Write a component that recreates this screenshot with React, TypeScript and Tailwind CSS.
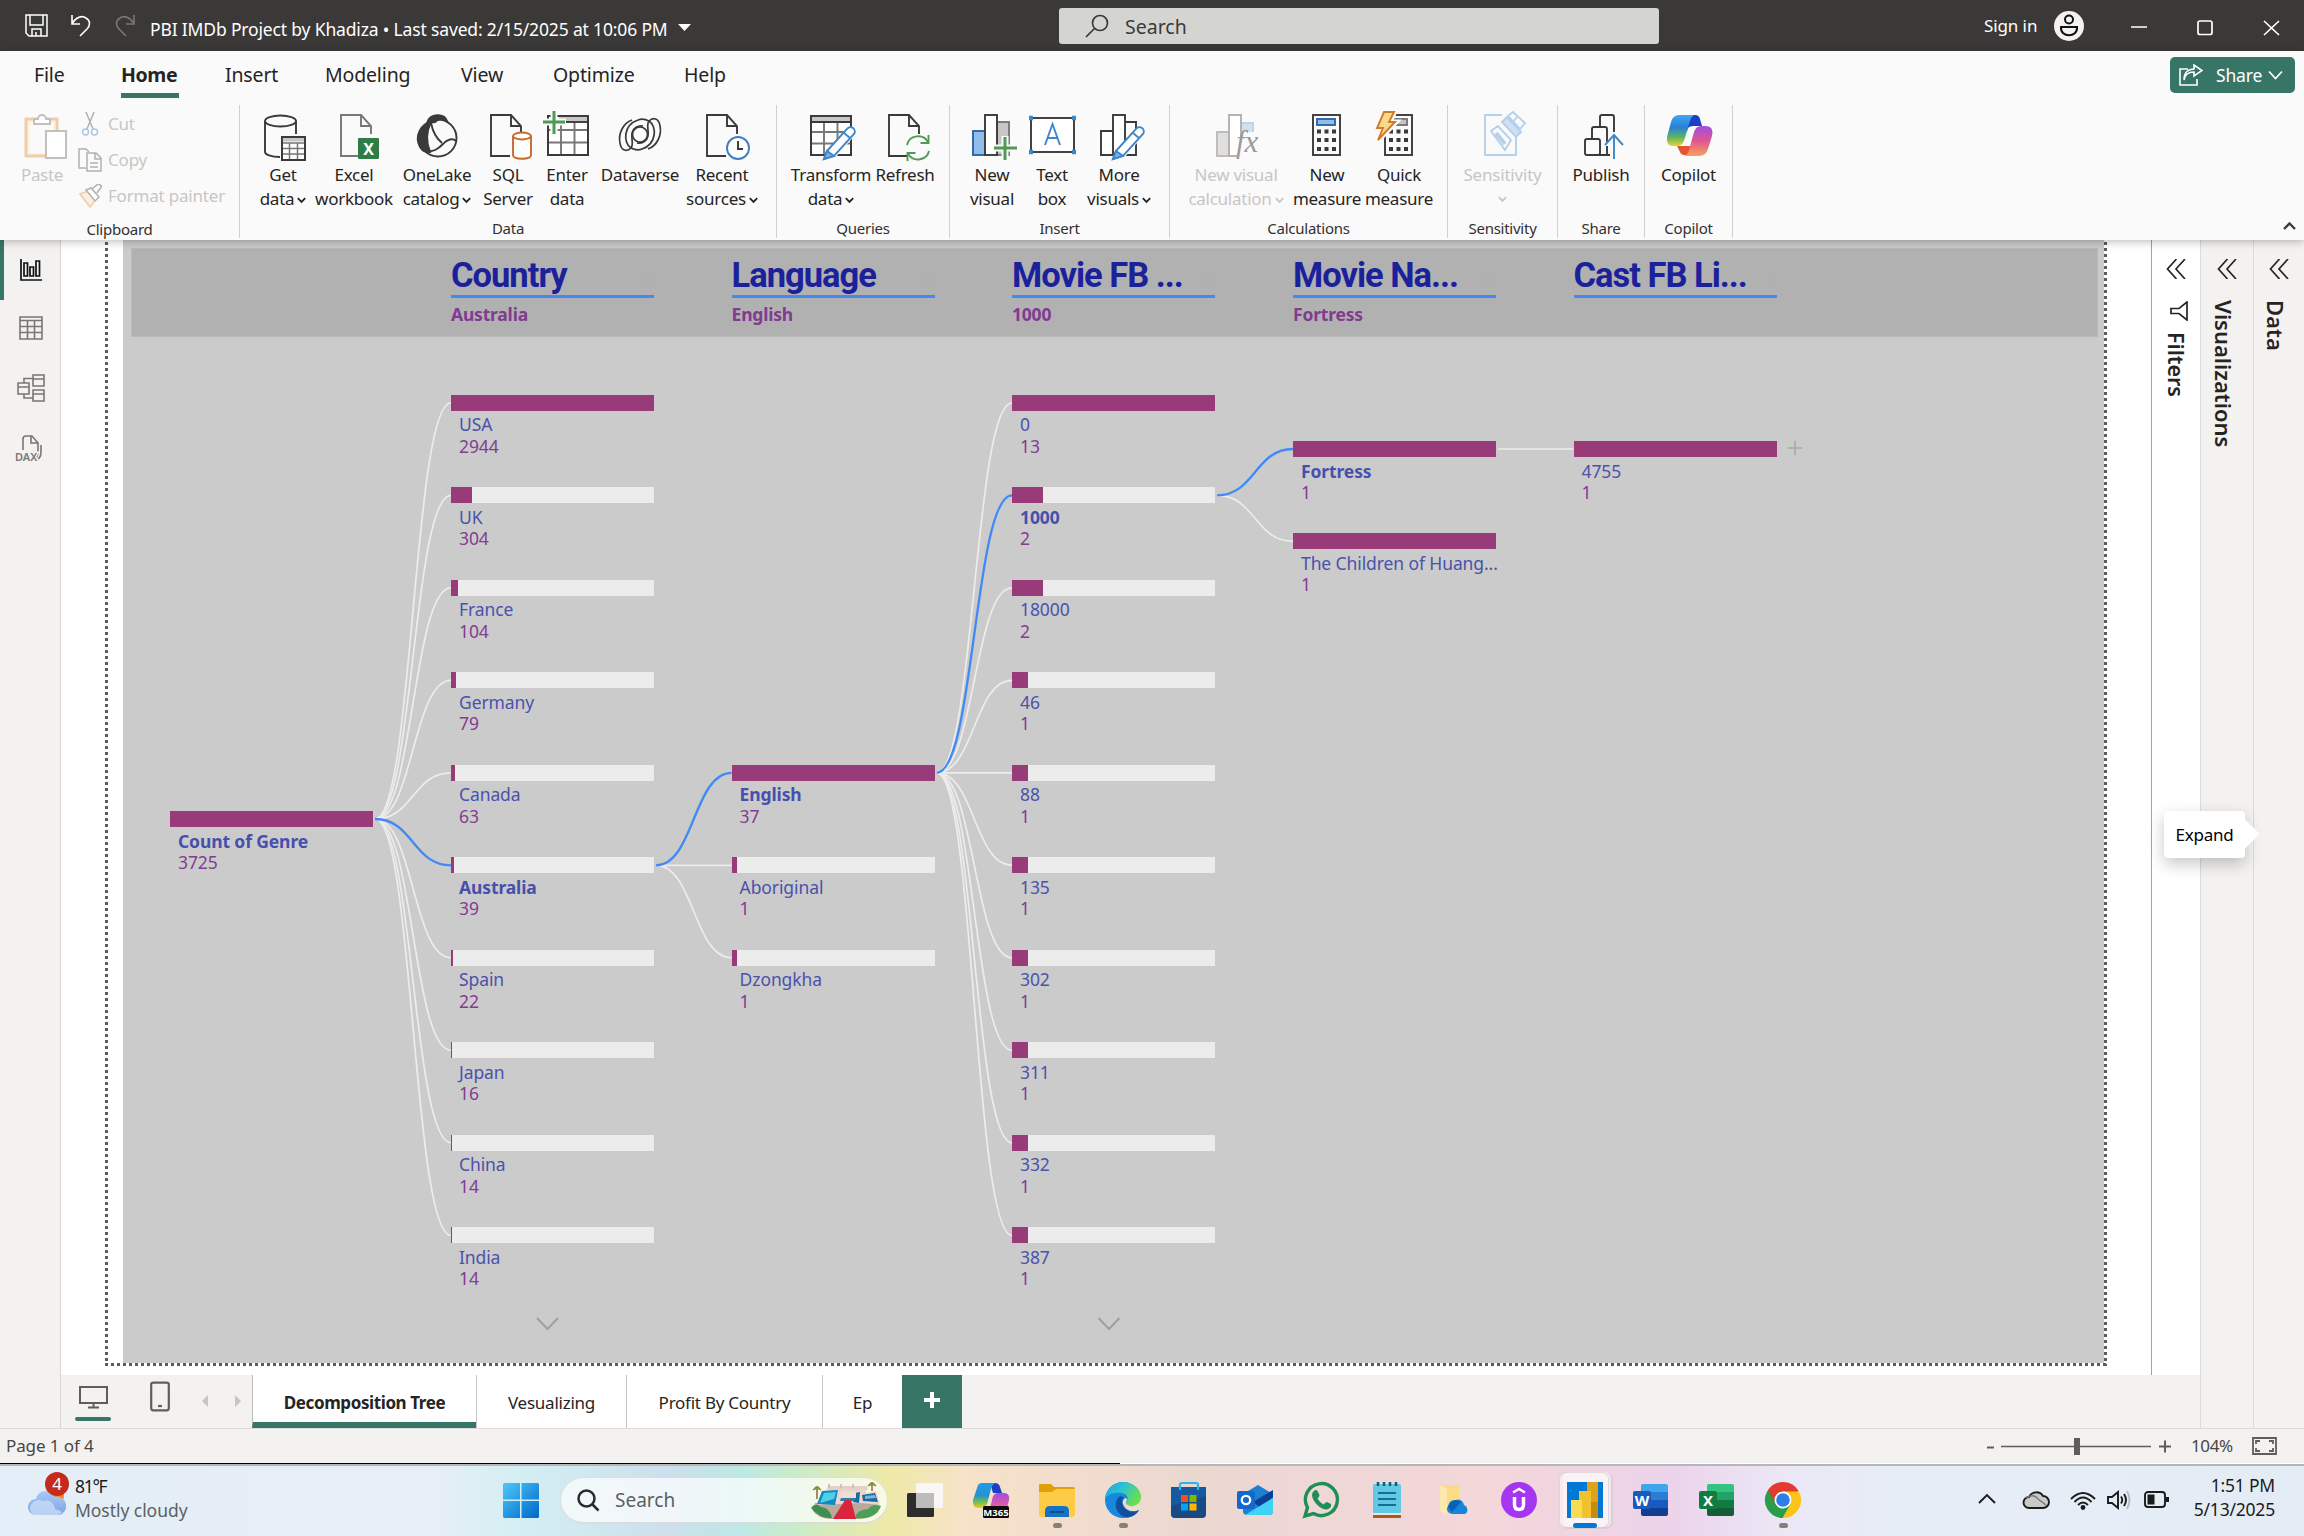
import React from "react";

const FONT = "font-['Noto_Sans','Open_Sans',sans-serif]";
const K = "#3b3a39";
const G = "#797775";

/* ---------- ribbon icons, drawn on a 48 x 48 grid ---------- */

function Ico({ children }: { children: React.ReactNode }) {
  return (
    <svg className="h-12 w-12 shrink-0 overflow-visible" viewBox="0 0 48 48" fill="none" stroke={K} strokeWidth="1.900">
      {children}
    </svg>
  );
}

function Page({ x, color = K }: { x: number; color?: string }) {
  return (
    <g transform={`translate(${x} 0)`} stroke={color}>
      <path d="M20 44H1V3H21L31 14V22" />
      <path d="M21 3V14H31" />
    </g>
  );
}

function Pencil() {
  return (
    <g>
      <path d="M20 41L41 17L48 23L28 46L17 49Z" fill="#fafafa" stroke="none" />
      <path d="M20 39L40 17a4 4 0 0 1 7 5L27 44L17 47Z" fill="#fff" stroke="#3f86c8" />
      <path d="M20 39L27 44L17 47Z" fill="#7fb2e5" stroke="#3f86c8" />
      <path d="M37 21l6 5" stroke="#3f86c8" />
    </g>
  );
}

function CalcBody({ x, gray }: { x: number; gray?: boolean }) {
  return (
    <g transform={`translate(${x} 0)`}>
      <rect x="1" y="3" width="27" height="40" />
      <rect x="5" y="7" width="18" height="6" fill={gray ? "#c8c6c4" : "#92bdea"} stroke={gray ? G : "#2b66a8"} />
      <path d="M5 19.500h4m3.500 0h4m3.500 0h4M5 28h4m3.500 0h4m3.500 0h4M5 37h4m3.500 0h4m3.500 0h4" strokeWidth="4" />
    </g>
  );
}

const icons: Record<string, React.ReactNode> = {
  get: (
    <Ico>
      <g transform="translate(-1 0)">
        <ellipse cx="22.500" cy="9" rx="15.500" ry="5.500" />
        <path d="M7 9V40c0 2.500 6 5 15 5M38 9V22" />
        <rect x="24" y="25" width="23" height="23" fill="#fff" />
        <path d="M24 27.500H47" stroke="#c8c6c4" strokeWidth="4" />
        <path d="M24 31H47M24 36.500H47M24 42H47M31.500 31V47M39.500 31V47" stroke={G} strokeWidth="1.500" />
        <rect x="24" y="25" width="23" height="23" />
      </g>
    </Ico>
  ),
  excel: (
    <Ico>
      <Page x={10} color={G} />
      <rect x="28" y="26" width="21" height="21" rx="1" fill="#2f7d45" stroke="none" />
      <text x="38.500" y="42.500" textAnchor="middle" fontSize="16" fontWeight="700" fill="#fff" stroke="none">X</text>
    </Ico>
  ),
  onelake: (
    <Ico>
      <circle cx="25" cy="26" r="18.500" />
      <path d="M14 11C17 1 31 1 34 9c-5-2.500-9-2-12 1Z" fill={K} />
      <path d="M18 10C8 12 1 24 7 35c3 5 6 5 10 5C13 30 13 20 18 10Z" fill={K} />
      <path d="M18 11c2 10 5 15 11 20M13 39c8 1 12-2 17-7c4-5 10-6 13-3" />
    </Ico>
  ),
  sql: (
    <Ico>
      <Page x={6} />
      <g stroke="#c8692c">
        <path d="M29 24V43c0 5 18 5 18 0V24" fill="#fff" />
        <ellipse cx="38" cy="24" rx="9" ry="3.500" fill="#fff" />
      </g>
    </Ico>
  ),
  enter: (
    <Ico>
      <rect x="5" y="4" width="40" height="39" fill="#fff" />
      <path d="M16 6.500H44" stroke="#c8c6c4" strokeWidth="5" />
      <path d="M5 18H45M5 30.500H45M18 10V43M31.500 10V43" stroke={G} />
      <path d="M16 10H45" />
      <rect x="5" y="4" width="40" height="39" />
      <path d="M11 -2V23M-1 10H23" stroke="#fafafa" strokeWidth="7" />
      <path d="M11 -1V22M0 10H22" stroke="#4f9a56" strokeWidth="3" />
    </Ico>
  ),
  dataverse: (
    <Ico>
      <g strokeWidth="1.700">
        <path d="M44 14C43 6 37 5 33 9C30 13 33 17 32 24C31 29 26 32 21 31" />
        <path d="M4 31C5 39 11 40 15 36C18 32 15 28 16 21C17 16 22 13 27 14" />
        <path d="M15 36C7 31 7 13 22 8C27 6 31 8 33 9" />
        <path d="M33 9C41 14 41 32 26 37C21 39 17 37 15 36" />
        <path d="M4 31C2 22 7 11 16 8M44 14C46 23 41 34 32 37" />
        <circle cx="24" cy="22.500" r="7.500" />
      </g>
    </Ico>
  ),
  recent: (
    <Ico>
      <Page x={8} />
      <circle cx="40" cy="36" r="11" fill="#fff" stroke="#3f7fbf" />
      <path d="M40 29V37H45" />
    </Ico>
  ),
  transform: (
    <Ico>
      <rect x="4" y="4" width="40" height="39" fill="#fff" />
      <path d="M5 7H43" stroke="#c8c6c4" strokeWidth="5" />
      <path d="M4 20H44M4 31.500H44M17 10V43M30.500 10V43" stroke={G} />
      <path d="M4 10H44" />
      <rect x="4" y="4" width="40" height="39" />
      <Pencil />
    </Ico>
  ),
  refresh: (
    <Ico>
      <Page x={7} />
      <g stroke="#4f9a56">
        <path d="M26 33c2-10 16-12 21-3M48 39c-2 9-15 12-21 3" />
        <path d="M47.500 23v8h-8M26.500 49v-8h8" />
      </g>
    </Ico>
  ),
  newvisual: (
    <Ico>
      <rect x="29" y="10" width="12" height="33" fill="#c8c6c4" stroke={G} />
      <rect x="5" y="19" width="12" height="24" fill="#92bdea" stroke="#2b66a8" />
      <rect x="17" y="3" width="12" height="40" fill="#fff" />
      <path d="M37 24V49M25 36H50" stroke="#fafafa" strokeWidth="7" />
      <path d="M37 25V48M26 36H49" stroke="#4f9a56" strokeWidth="3" />
    </Ico>
  ),
  textbox: (
    <Ico>
      <rect x="3" y="6" width="43" height="34" fill="#fff" />
      <path d="M1 6h4M44 6h4M1 40h4M44 40h4" stroke="#3f86c8" strokeWidth="4.500" />
      <path d="M17 33L24.500 12L32 33M19.500 26H29.500" stroke="#3f86c8" />
    </Ico>
  ),
  morevisuals: (
    <Ico>
      <path d="M30 10H41V43H6V19H18" fill="#fff" />
      <rect x="18" y="3" width="12" height="40" fill="#fff" />
      <g transform="translate(1 0)"><Pencil /></g>
    </Ico>
  ),
  visualcalc: (
    <Ico>
      <rect x="29" y="11" width="12" height="16" fill="#cfe0f3" stroke="#b9d3ee" />
      <rect x="5" y="20" width="12" height="24" fill="#e1dfdd" stroke="#bdbbb9" />
      <rect x="17" y="3" width="12" height="41" fill="#fff" stroke="#b3b1af" />
      <path d="M24 48L32 20H48V48Z" fill="#fafafa" stroke="none" />
      <text x="24" y="40" fontSize="31" fontStyle="italic" fontFamily="Liberation Serif, serif" fill="#9c9a98" stroke="none">fx</text>
    </Ico>
  ),
  measure: (
    <Ico>
      <CalcBody x={9} />
    </Ico>
  ),
  quick: (
    <Ico>
      <CalcBody x={9} gray />
      <path d="M8 -1H20L15 10H21L2 30L7 16H1Z" fill="#f7d774" stroke="#fafafa" strokeWidth="5" />
      <path d="M9 0H19L14 10H20L3 28L8 16H2Z" fill="#f9d98a" stroke="#d17a2c" />
    </Ico>
  ),
  sensitivity: (
    <Ico>
      <g stroke="#b5d0ea">
        <path d="M24 3H7V43H38V22" />
        <path d="M13 19L20 14L33 28L27 38Z" fill="#fafafa" />
        <path d="M18 21L27 32" strokeWidth="4" />
        <path d="M24 10L29 5L43 20L38 25Z" fill="#cfe0f3" />
        <path d="M30 4L35 0L47 11L42 17Z" fill="#fafafa" />
        <path d="M36 9L39 5" />
      </g>
    </Ico>
  ),
  publish: (
    <Ico>
      <rect x="8" y="27" width="15" height="16" rx="2" />
      <path d="M15 27V17a2 2 0 0 1 2-2H28a2 2 0 0 1 2 2V30M23 15V5a2 2 0 0 1 2-2H35a2 2 0 0 1 2 2V20M22 43H33M30 34V43" />
      <path d="M37 47V24M28 33L37 23L46 33" stroke="#3f86c8" />
    </Ico>
  ),
  copilot: <CopilotMark />,
};

function CopilotMark() {
  return (
    <svg className="h-12 w-12 shrink-0 overflow-visible" viewBox="0 0 48 48">
      <defs>
        <linearGradient id="cpA" x1="0" y1="0" x2="0" y2="1">
          <stop offset="0" stopColor="#3fa9f0" />
          <stop offset=".4" stopColor="#2a7fd8" />
          <stop offset=".72" stopColor="#5db85c" />
          <stop offset="1" stopColor="#f0cf33" />
        </linearGradient>
        <linearGradient id="cpB" x1="0" y1="0" x2="0" y2="1">
          <stop offset="0" stopColor="#a34de0" />
          <stop offset=".5" stopColor="#e0568f" />
          <stop offset="1" stopColor="#f6a35a" />
        </linearGradient>
      </defs>
      <path d="M12 34H28L24 41Q22 44 19 43Q16 43 15 40Z" fill="#e4572e" />
      <path d="M22 3H30Q34 3 35 7L37 14H28Q22 14 22 20Z" fill="#1c3fc4" />
      <path d="M14 3H29Q26 5 25 9L19 29Q17 34 12 34H8Q1 34 2 25L6 10Q8 3 14 3Z" fill="url(#cpA)" />
      <path d="M34 44H19Q23 43 24 38L29 20Q31 14 36 14H41Q49 14 47 24L43 37Q41 44 34 44Z" fill="url(#cpB)" />
    </svg>
  );
}

/* ---------- ribbon ---------- */

function Caret({ className = "" }: { className?: string }) {
  return (
    <svg className={`inline-block h-[7px] w-[9px] ${className}`} viewBox="0 0 9 7" fill="none" stroke="currentColor" strokeWidth="1.800">
      <path d="M.8 1.200L4.500 5L8.200 1.200" />
    </svg>
  );
}

function Btn({ icon, l1, l2, caret, w, off = "" }: { icon: string; l1: string; l2?: string; caret?: boolean; w: string; off?: string }) {
  return (
    <div className={`flex shrink-0 flex-col items-center ${w} ${off}`}>
      {icons[icon]}
      <div className="mt-[3px] flex flex-col items-center text-[17px] leading-6 tracking-[-0.25px] whitespace-nowrap">
        <span>{l1}</span>
        <span className="flex items-center gap-[3px]">
          {l2}
          {caret && <Caret className="mt-[3px]" />}
        </span>
      </div>
    </div>
  );
}

function Group({ label, w, pad, children }: { label: string; w: string; pad: string; children: React.ReactNode }) {
  return (
    <div className={`flex h-[133px] shrink-0 flex-col border-r border-[#d2d0ce] ${w}`}>
      <div className={`flex h-[113px] pt-[7px] ${pad}`}>{children}</div>
      <div className="pt-px text-center text-[15px] leading-5 tracking-[-0.25px] text-[#323130]">{label}</div>
    </div>
  );
}

function Clipboard() {
  return (
    <Group label="Clipboard" w="w-[240px]" pad="pl-[18px]">
      <div className="flex w-12 flex-col items-center text-[#c8c6c4]">
        <svg className="h-12 w-12 overflow-visible" viewBox="0 0 48 48" fill="none" strokeWidth="2">
          <path d="M8 7H39V44H8Z" fill="#fcf3e0" stroke="#f0cda6" strokeWidth="3" />
          <path d="M12 11H35V41H12Z" fill="#fafafa" stroke="none" />
          <path d="M16 12V7H20a4 4 0 0 1 8 0H32V12Z" fill="#fff" stroke="#c2c0be" />
          <rect x="28" y="19" width="20" height="27" fill="#fff" stroke="#c2c0be" />
        </svg>
        <div className="mt-[3px] text-[17px] leading-6 tracking-[-0.3px]">Paste</div>
      </div>
      <div className="-mt-0.5 ml-3 flex flex-col text-[17px] tracking-[-0.2px] text-[#c8c6c4]">
        <div className="flex h-9 items-center gap-1.5 pb-2">
          <svg className="h-6 w-6" viewBox="0 0 24 24" fill="none" strokeWidth="1.500">
            <path d="M8 0L15 17M16 0L9 17" stroke="#b3b1af" />
            <circle cx="7.500" cy="20" r="3" stroke="#a9c8e8" />
            <circle cx="16.500" cy="20" r="3" stroke="#a9c8e8" />
          </svg>
          Cut
        </div>
        <div className="flex h-9 items-center gap-1.5 pb-2">
          <svg className="h-6 w-6" viewBox="0 0 24 24" fill="none" stroke="#b3b1af" strokeWidth="1.500">
            <path d="M8 20H1V1H8L11 4" />
            <path d="M9 5H18L23 10V23H9ZM17 5V11H23M12 15H20M12 19H20" />
          </svg>
          Copy
        </div>
        <div className="flex h-9 items-center gap-1.5 pb-2">
          <svg className="h-6 w-6" viewBox="0 0 24 24" fill="none" strokeWidth="1.500">
            <path d="M2 10L10 7L18 15L12 23Z" fill="#fbeedd" stroke="#f0cda6" />
            <path d="M8 6L13 4L21 13L17 17Z" fill="#fff" stroke="#b3b1af" />
            <path d="M14 5L20 0L24 2L19 9" stroke="#b3b1af" />
          </svg>
          Format painter
        </div>
      </div>
    </Group>
  );
}

function TitleBar() {
  return (
    <header className="flex h-[51px] shrink-0 items-center bg-[#3b3937] text-white">
      <div className="flex w-[1059px] items-center">
        <svg className="ml-[25px] h-[23px] w-[23px]" viewBox="0 0 23 23" fill="none" stroke="#fff" strokeWidth="1.500">
          <path d="M1 1H22V22H4L1 19ZM5 1V11H18V1M7 22V15H16V22M11 18V22" />
        </svg>
        <svg className="ml-[22px] h-[23px] w-[22px]" viewBox="0 0 22 23" fill="none" stroke="#fff" strokeWidth="1.600">
          <path d="M2 1V10H10M2 9.500C6 3 12 1 16 4C21 7 20 12 17 15L10 22" />
        </svg>
        <svg className="ml-[22px] h-[23px] w-[22px]" viewBox="0 0 22 23" fill="none" stroke="#797775" strokeWidth="1.600">
          <path d="M20 1V10H12M20 9.500C16 3 10 1 6 4C1 7 2 12 5 15L12 22" />
        </svg>
        <span className="ml-[14px] pt-[7px] text-[17.500px] tracking-[-0.16px] whitespace-nowrap">PBI IMDb Project by Khadiza • Last saved: 2/15/2025 at 10:06 PM</span>
        <svg className="mt-[3px] ml-[10px] h-[7px] w-[13px]" viewBox="0 0 13 7" fill="#fff"><path d="M0 0H13L6.500 7Z" /></svg>
      </div>
      <div className="flex h-9 w-[600px] items-center rounded-[3px] bg-[#d4d4d1] pl-[26px] text-[#3b3a39]">
        <svg className="h-6 w-6" viewBox="0 0 24 24" fill="none" stroke={K} strokeWidth="1.700">
          <circle cx="15" cy="9" r="7.500" />
          <path d="M9.500 14.500L1 23" />
        </svg>
        <span className="ml-4 pt-[3px] text-[19.500px]">Search</span>
      </div>
      <span className="ml-[325px] w-[70px] pt-px text-[17px] tracking-[-0.1px] whitespace-nowrap">Sign in</span>
      <svg className="h-[30px] w-[30px]" viewBox="0 0 30 30">
        <circle cx="15" cy="15" r="15" fill="#f3f2f1" />
        <g fill="none" stroke="#111" strokeWidth="2">
          <circle cx="15" cy="8.500" r="4" />
          <path d="M7 16H23C24 27 6 27 7 16Z" />
        </g>
      </svg>
      <svg className="mt-1 ml-[46px] h-[17px] w-[150px]" viewBox="0 0 150 17" fill="none" stroke="#fff" strokeWidth="1.700">
        <path d="M1 8H17M134 2L149 16M149 2L134 16" />
        <rect x="68" y="2" width="14" height="13.500" rx="2" />
      </svg>
    </header>
  );
}

function Ribbon() {
  return (
    <section className="relative z-10 flex h-[189px] shrink-0 flex-col bg-[#fafafa] text-[#252423] shadow-[0_2px_8px_rgba(0,0,0,0.25)]">
      <nav className="flex h-[54px] items-start text-[19.500px] leading-[48px] tracking-[-0.15px]">
        <div className="ml-[34px] w-[87px]">File</div>
        <div className="w-[104px]">
          <div className="flex h-[47px] w-[58px] flex-col border-b-[5px] border-[#377666] font-bold tracking-[-0.4px]">Home</div>
        </div>
        <div className="w-[100px]">Insert</div>
        <div className="w-[136px]">Modeling</div>
        <div className="w-[92px]">View</div>
        <div className="w-[131px]">Optimize</div>
        <div>Help</div>
        <div className="mt-1.5 mr-[9px] ml-auto flex h-9 w-[125px] items-center rounded-[5px] bg-[#377666] pl-[9px] text-[17.500px] text-white">
          <svg className="h-[23px] w-6" viewBox="0 0 24 23" fill="none" stroke="#fff" strokeWidth="1.600">
            <path d="M9 5H1V21H18V15M5 16C6 10 10 8 15 8V12L23 6.500L15 1V5C9 5 5 9 5 16Z" />
          </svg>
          <span className="ml-[13px]">Share</span>
          <svg className="ml-[6px] h-[10px] w-[15px]" viewBox="0 0 15 10" fill="none" stroke="#fff" strokeWidth="1.700"><path d="M1 1.500L7.500 8.500L14 1.500" /></svg>
        </div>
      </nav>
      <div className="flex">
        <Clipboard />
        <Group label="Data" w="w-[537px]" pad="pl-2">
          <Btn icon="get" l1="Get" l2="data" caret w="w-[70px]" />
          <Btn icon="excel" l1="Excel" l2="workbook" w="w-[72px]" />
          <Btn icon="onelake" l1="OneLake" l2="catalog" caret w="w-[94px]" />
          <Btn icon="sql" l1="SQL" l2="Server" w="w-[48px]" />
          <Btn icon="enter" l1="Enter" l2="data" w="w-[70px]" />
          <Btn icon="dataverse" l1="Dataverse" w="w-[76px]" />
          <Btn icon="recent" l1="Recent" l2="sources" caret w="w-[88px]" />
        </Group>
        <Group label="Queries" w="w-[173px]" pad="pl-2">
          <Btn icon="transform" l1="Transform" l2="data" caret w="w-[92px]" />
          <Btn icon="refresh" l1="Refresh" w="w-[56px]" />
        </Group>
        <Group label="Insert" w="w-[220px]" pad="pl-3">
          <Btn icon="newvisual" l1="New" l2="visual" w="w-[60px]" />
          <Btn icon="textbox" l1="Text" l2="box" w="w-[60px]" />
          <Btn icon="morevisuals" l1="More" l2="visuals" caret w="w-[74px]" />
        </Group>
        <Group label="Calculations" w="w-[278px]" pad="pl-[11px]">
          <Btn icon="visualcalc" l1="New visual" l2="calculation" caret w="w-[110px]" off="text-[#c8c6c4]" />
          <Btn icon="measure" l1="New" l2="measure" w="w-[72px]" />
          <Btn icon="quick" l1="Quick" l2="measure" w="w-[72px]" />
        </Group>
        <Group label="Sensitivity" w="w-[110px]" pad="justify-center">
          <div className="flex flex-col items-center text-[#c8c6c4]">
            {icons.sensitivity}
            <div className="mt-[3px] text-[17px] leading-6 tracking-[-0.2px]">Sensitivity</div>
            <Caret className="mt-[9px]" />
          </div>
        </Group>
        <Group label="Share" w="w-[87px]" pad="justify-center">
          <Btn icon="publish" l1="Publish" w="w-[86px]" />
        </Group>
        <Group label="Copilot" w="w-[88px]" pad="justify-center">
          <Btn icon="copilot" l1="Copilot" w="w-[86px]" />
        </Group>
        <svg className="mt-[117px] mr-2 ml-auto h-2 w-[13px]" viewBox="0 0 13 8" fill="none" stroke={K} strokeWidth="2.400"><path d="M1 7L6.500 1.500L12 7" /></svg>
      </div>
    </section>
  );
}

/* ---------- left rail ---------- */

function Rail() {
  return (
    <aside className="flex w-[61px] shrink-0 flex-col border-r border-[#d8d6d4] bg-[#f3f2f1]">
      <div className="flex h-[60px] items-center border-l-4 border-[#377666] pl-4">
        <svg className="h-[22px] w-[22px]" viewBox="0 0 22 22" fill="none" stroke="#111" strokeWidth="1.700">
          <path d="M1 0V21H22" />
          <path d="M4 4H7.500V17H4ZM10 8H13.500V17H10ZM16 2H19.500V17H16Z" />
        </svg>
      </div>
      <svg className="mt-4 ml-[19px] h-6 w-6" viewBox="0 0 24 24" fill="none" stroke={G} strokeWidth="1.600">
        <path d="M1 1H23V23H1ZM1 4.500H23M1 10.500H23M1 16.500H23M8.500 4V23M15.500 4V23" />
      </svg>
      <svg className="mt-[34px] ml-[17px] h-7 w-7" viewBox="0 0 28 28" fill="none" stroke={G} strokeWidth="1.600">
        <path d="M1 9H12V20H1ZM1 13H12M16 1H27V12H16ZM16 5H27M16 16H27V27H16ZM16 20H27M7 9V4.500H16M7 20V24H16" />
      </svg>
      <svg className="mt-[33px] ml-4 h-[27px] w-[27px] overflow-visible" viewBox="0 0 27 27" fill="none" stroke={G} strokeWidth="1.600">
        <path d="M7 15V4Q7 1 10 1H16L22 8V16Q22 22 19 24M15 1V8H22M25 10V17Q25 22 22 24" />
        <text x="-1" y="25.500" fontSize="11" fontWeight="600" fill={G} stroke="#f3f2f1" strokeWidth="3" paintOrder="stroke">DAX</text>
      </svg>
    </aside>
  );
}

/* ---------- decomposition tree ---------- */

type Node = { label: string; value: string; x: number; y: number; frac: number; on?: boolean };

const BAR = 203;
const Y0 = 162.8;
const STEP = 92.5;
const X = [109, 390, 670.600, 951, 1232, 1512.5];

const root: Node = { label: "Count of Genre", value: "3725", x: X[0], y: 579, frac: 1, on: true };

const countries: Node[] = [
  ["USA", 2944], ["UK", 304], ["France", 104], ["Germany", 79], ["Canada", 63],
  ["Australia", 39], ["Spain", 22], ["Japan", 16], ["China", 14], ["India", 14],
].map(([label, v], i) => ({ label: String(label), value: String(v), x: X[1], y: Y0 + STEP * i, frac: Number(v) / 2944, on: label === "Australia" }));

const languages: Node[] = [["English", 37], ["Aboriginal", 1], ["Dzongkha", 1]].map(([label, v], i) => ({
  label: String(label), value: String(v), x: X[2], y: Y0 + STEP * (i + 4), frac: Number(v) / 37, on: i === 0,
}));

const likes: Node[] = [
  ["0", 13], ["1000", 2], ["18000", 2], ["46", 1], ["88", 1], ["135", 1], ["302", 1], ["311", 1], ["332", 1], ["387", 1],
].map(([label, v], i) => ({ label: String(label), value: String(v), x: X[3], y: Y0 + STEP * i, frac: Number(v) / 13, on: i === 1 }));

const movies: Node[] = [
  { label: "Fortress", value: "1", x: X[4], y: 209, frac: 1, on: true },
  { label: "The Children of Huang...", value: "1", x: X[4], y: 301.3, frac: 1 },
];
const cast: Node[] = [{ label: "4755", value: "1", x: X[5], y: 209, frac: 1 }];

const branches: [Node, Node[]][] = [
  [root, countries],
  [countries[5], languages],
  [languages[0], likes],
  [likes[1], movies],
  [movies[0], cast],
];

const headers = [
  { x: X[1], t: "Country", s: "Australia" },
  { x: X[2], t: "Language", s: "English" },
  { x: X[3], t: "Movie FB ...", s: "1000" },
  { x: X[4], t: "Movie Na...", s: "Fortress" },
  { x: X[5], t: "Cast FB Li...", s: "" },
];

function link(a: Node, b: Node) {
  const x0 = a.x + BAR + 2;
  const m = (x0 + b.x) / 2;
  return `M${x0} ${a.y}C${m} ${a.y} ${m} ${b.y} ${b.x} ${b.y}`;
}

function Tree() {
  const nodes = [root, ...countries, ...languages, ...likes, ...movies, ...cast];
  return (
    <div className="relative h-full w-full overflow-hidden bg-white">
      <div className="absolute top-0 left-[62px] h-[1123px] w-[1981px] bg-[#cbcbcb]" />
      <div className="absolute top-0 left-[44px] h-[1126px] w-[3px] bg-[repeating-linear-gradient(to_bottom,transparent_0_2px,#5e5c5a_2px_5px,transparent_5px_6px)]" />
      <div className="absolute top-0 left-[2043px] h-[1126px] w-[3px] bg-[repeating-linear-gradient(to_bottom,transparent_0_2px,#5e5c5a_2px_5px,transparent_5px_6px)]" />
      <div className="absolute top-[1123px] left-[44px] h-[3px] w-[2002px] bg-[repeating-linear-gradient(to_right,#5e5c5a_0_3px,transparent_3px_6px)]" />
      <div className="absolute top-2 left-[70px] h-[89px] w-[1967px] border border-[#b9b9b9] bg-[#b1b1b1]" />
      {headers.map((h) => (
        <div key={h.t} className="absolute top-[18px] w-[203px]" style={{ left: h.x }}>
          <div className="flex h-[40px] items-center justify-between border-b-[3px] border-[#4189f5]">
            <span className="-mt-[3px] font-['Roboto',sans-serif] text-[34.500px] leading-9 font-bold tracking-[-1px] whitespace-nowrap text-[#1a219b]">{h.t}</span>
            <svg className="mt-2.5 h-3 w-3" viewBox="0 0 12 12" stroke="#b5adab" strokeWidth="1.500"><path d="M1 0L11 12M11 0L1 12" /></svg>
          </div>
          <div className="mt-1 text-[17.500px] leading-6 font-bold tracking-[-0.2px] text-[#823a92]">{h.s}</div>
        </div>
      ))}
      <svg className="absolute top-0 left-0 h-[1135px] w-[2090px]" fill="none">
        {branches.map(([p, kids]) => kids.filter((k) => !k.on).map((k) => <path key={k.label} d={link(p, k)} stroke="#ececec" strokeWidth="1.700" />))}
        {branches.map(([p, kids]) => kids.filter((k) => k.on).map((k) => <path key={k.label} d={link(p, k)} stroke="#4189f5" strokeWidth="2.300" />))}
        <path d="M1727 208H1741M1734 201V215" stroke="#b0aeac" strokeWidth="2" />
        <path d="M476 1078L486.500 1089L497 1078M1037.500 1078L1048 1089L1058.500 1078" stroke="#a19f9d" strokeWidth="2" />
      </svg>
      {nodes.map((n) => (
        <div key={`${n.x}-${n.label}`} className="absolute w-[203px]" style={{ left: n.x, top: n.y - 8 }}>
          <div className="h-4 bg-[#ececec]">
            <div className="h-4 bg-[#9a3b79]" style={{ width: Math.max(1.3, n.frac * BAR) }} />
          </div>
          <div className="mt-[3.500px] pl-2 text-[17.500px] leading-[21.500px] tracking-[-0.1px] whitespace-nowrap">
            <div className={n.on ? "font-bold tracking-[-0.12px] text-[#4650ac]" : "text-[#4a52ab]"}>{n.label}</div>
            <div className="text-[#843c94]">{n.value}</div>
          </div>
        </div>
      ))}
    </div>
  );
}

/* ---------- right panes ---------- */

function Chevrons() {
  return (
    <svg className="mt-[19px] h-5 w-5" viewBox="0 0 20 20" fill="none" stroke="#252423" strokeWidth="1.700">
      <path d="M10.500 0L1.500 10L10.500 20M19 0L10 10L19 20" />
    </svg>
  );
}

function VLabel({ t, className = "" }: { t: string; className?: string }) {
  return <div className={`leading-[26px] font-semibold text-[#252423] [writing-mode:vertical-rl] ${className}`}>{t}</div>;
}

/* ---------- page tabs and status ---------- */

function PageTabs() {
  return (
    <div className="flex h-[53px] shrink-0 bg-[#f3f2f1] text-[17px] tracking-[-0.25px] text-[#252423]">
      <div className="ml-[14px] flex w-9 flex-col items-center">
        <svg className="mt-2.5 h-6 w-[29px]" viewBox="0 0 29 24" fill="none" stroke="#605e5c" strokeWidth="2">
          <path d="M1 2H28V18H1ZM14.500 18V23M9 22.500H20" />
        </svg>
        <div className="mt-2 h-1 w-9 rounded bg-[#377666]" />
      </div>
      <svg className="mt-1.5 ml-[39px] h-[31px] w-5" viewBox="0 0 20 30" fill="none" stroke="#605e5c" strokeWidth="2.200">
        <rect x="1.200" y="1.200" width="17.600" height="27.600" rx="2" />
        <path d="M8 24.500H12" />
      </svg>
      <svg className="mt-5 ml-[32px] h-3 w-[40px]" viewBox="0 0 40 12" fill="#c8c6c4"><path d="M6 0V12L0 6ZM33 0V12L39 6Z" /></svg>
      <div className="ml-[10px] w-[224px] border-b-[6px] border-l border-[#bdbbb9] border-b-[#377666] bg-white text-center leading-[55px] font-bold tracking-[-0.4px]">Decomposition Tree</div>
      <div className="w-[150px] border-l border-[#c8c6c4] bg-white text-center leading-[55px]">Vesualizing</div>
      <div className="w-[196px] border-l border-[#c8c6c4] bg-white text-center leading-[55px]">Profit By Country</div>
      <div className="w-[80px] border-l border-[#c8c6c4] bg-white text-center leading-[55px]">Ep</div>
      <div className="flex w-[60px] items-center justify-center bg-[#377666]">
        <svg className="-mt-1 h-4 w-4" viewBox="0 0 16 16" stroke="#fff" strokeWidth="4"><path d="M8 0V16M0 8H16" /></svg>
      </div>
    </div>
  );
}

function StatusBar() {
  return (
    <div className="flex h-[35px] shrink-0 items-center border-t border-[#dedcda] bg-[#f3f2f1] text-[17px] tracking-[-0.1px] text-[#484644]">
      <span className="ml-1.5">Page 1 of 4</span>
      <svg className="ml-auto h-5 w-[184px]" viewBox="0 0 184 20" fill="none" stroke="#605e5c" strokeWidth="2">
        <path d="M0 11.500H7M172 10.500H184M178 4.500V16.500" />
        <path d="M14 10.500H164" strokeWidth="1.500" />
        <rect x="87" y="2" width="6" height="17" fill="#605e5c" stroke="none" />
      </svg>
      <span className="ml-[20px] w-[44px] text-[17px] tracking-[-0.4px]">104%</span>
      <svg className="mr-[27px] ml-[17px] h-[18px] w-[25px]" viewBox="0 0 25 18" fill="none" stroke="#605e5c" strokeWidth="1.800">
        <path d="M1 1H24V17H1ZM4 7V4H8M17 4H21V7M21 11V14H17M8 14H4V11" />
      </svg>
    </div>
  );
}

/* ---------- taskbar ---------- */

function App36({ children, dot }: { children: React.ReactNode; dot?: boolean }) {
  return (
    <div className="relative flex h-[70px] w-[66px] shrink-0 flex-col items-center pt-4">
      <svg className="h-9 w-9 overflow-visible" viewBox="0 0 36 36" fill="none">{children}</svg>
      {dot && <div className="absolute top-[57px] h-[5px] w-[9px] rounded-full bg-[#85807c]" />}
    </div>
  );
}

function Office({ a, b, c, d, t, l }: { a: string; b: string; c: string; d: string; t: string; l: string }) {
  return (
    <App36>
      <path d="M10 2H33Q35 2 35 4V10H8V4Q8 2 10 2Z" fill={a} />
      <path d="M8 10H35V18H8Z" fill={b} />
      <path d="M8 18H35V26H8Z" fill={c} />
      <path d="M8 26H35V32Q35 34 33 34H10Q8 34 8 32Z" fill={d} />
      <rect x="0" y="9" width="18" height="18" rx="2" fill={t} />
      <text x="9" y="23.500" textAnchor="middle" fontSize="15" fontWeight="700" fill="#fff">{l}</text>
    </App36>
  );
}

function Taskbar() {
  return (
    <footer className="flex h-[72px] shrink-0 border-t-2 border-[#b5b6b8] bg-[linear-gradient(90deg,#e3eef8_0px,#e8eef7_430px,#d3eff3_520px,#cddfeb_670px,#bde8e5_740px,#ccebc8_800px,#eee9a8_890px,#f6e3c8_960px,#f2dccf_1080px,#ead8cf_1190px,#eed7d6_1290px,#f3d7d9_1480px,#ecd3ea_1670px,#ebe8f6_1790px,#e6edf6_1900px,#e3ecf5_2304px)]">
      <div className="flex w-[503px] pt-1.5 pl-[27px]">
        <svg className="h-11 w-[44px]" viewBox="0 0 44 44">
          <defs>
            <linearGradient id="cl" x1="0" y1="0" x2="0" y2="1"><stop offset="0" stopColor="#a9c9f7" /><stop offset="1" stopColor="#7fa4e4" /></linearGradient>
          </defs>
          <circle cx="28" cy="24" r="9" fill="#f08a1c" />
          <path d="M9 43a8 8 0 0 1 0-16a10 10 0 0 1 19-2a9 9 0 0 1 4 18Z" fill="url(#cl)" />
          <path d="M3 37a9 9 0 0 1 13-8a9 9 0 0 1 12 8q6 1 7 4l-4 2H9Q4 43 3 37Z" fill="#c9dcf8" opacity=".8" />
          <circle cx="30" cy="12" r="12" fill="#c42b1c" />
          <text x="30" y="18" textAnchor="middle" fontSize="17" fill="#fff">4</text>
        </svg>
        <div className="ml-1 text-[17.500px] leading-6 tracking-[-0.05px] text-[#1b1b1b]">
          <div className="mt-0.5 tracking-[-1.300px]">81°F</div>
          <div className="text-[#5b5f63]">Mostly cloudy</div>
        </div>
      </div>
      <svg className="mt-[17px] h-[35px] w-9" viewBox="0 0 36 35">
        <defs>
          <linearGradient id="win" x1="0" y1="0" x2="1" y2="1"><stop offset="0" stopColor="#4cc8fb" /><stop offset="1" stopColor="#0067c8" /></linearGradient>
        </defs>
        <path d="M1 0H17V16.500H0V1ZM18.500 0H35L36 1V16.500H18.500ZM0 18H17V35H1L0 34ZM18.500 18H36V34L35 35H18.500Z" fill="url(#win)" />
      </svg>
      <div className="mt-[11px] ml-[21px] flex h-[47px] w-[328px] items-center rounded-full border border-b-2 border-black/10 bg-white/70 pl-4">
        <svg className="h-[23px] w-[23px]" viewBox="0 0 23 23" fill="none" stroke="#2b2b2b" strokeWidth="2.500"><circle cx="9.500" cy="9.500" r="8" /><path d="M15 15L21.500 21.500" /></svg>
        <span className="ml-[15px] text-[19px] text-[#5b5f63]">Search</span>
        <svg className="mr-1 ml-auto h-[38px] w-[74px]" viewBox="0 0 72 38">
          <path d="M5 22H68V31Q60 38 50 38H20Q8 37 3 30Z" fill="#b9aa9c" />
          <path d="M12 10L29 8L32 6H56V12L66 10L70 24L52 22L30 23L8 24Z" fill="#e9d6cf" />
          <path d="M18 5H57L58 9H17Z" fill="#e6cfc6" />
          <path d="M19 3V7M31 3V7M43 3V7" stroke="#d9bdb3" strokeWidth="2" />
          <path d="M12 10L28 9L25 24L7 23Z" fill="#1389c4" />
          <path d="M14 12L26 11L24 18L10 22Z" fill="#4ed0e6" />
          <path d="M45 12L50 11L49 22L43 21ZM52 14L65 12L68 21L53 20Z" fill="#1a6aa0" />
          <path d="M55 15L65 14L66 17L55 18Z" fill="#7fb6dd" />
          <path d="M31 11H46V17H31Z" fill="#f0ddd4" />
          <path d="M31 17H45V20H30Z" fill="#2e7fb0" />
          <path d="M35 19H41L46 38H23Z" fill="#d9263d" />
          <path d="M1 27Q5 21 11 26Q20 27 22 37Q10 38 1 27Z" fill="#3c8f4e" />
          <path d="M71 25Q63 22 58 28Q46 29 45 37Q66 39 71 25Z" fill="#4aa055" />
          <path d="M7 18V8M62 10V4" stroke="#8a6a3a" strokeWidth="1.500" />
          <path d="M3 9Q7 2 11 9Q7 6 3 9ZM58 5Q62-2 66 5Q62 2 58 5Z" fill="#7b8f2f" stroke="#7b8f2f" />
        </svg>
      </div>
      <div className="ml-1 flex">
        <App36>
          <rect x="0" y="11" width="27" height="24" rx="1.500" fill="#2c2c2c" />
          <rect x="9" y="1" width="27" height="25" rx="1.500" fill="#f8f8f8" opacity=".95" />
          <rect x="9" y="11" width="18" height="15" fill="#bcbcbc" />
        </App36>
        <App36>
          <defs>
            <linearGradient id="mA" x1="0" y1="0" x2="0" y2="1"><stop offset="0" stopColor="#1f9cf0" /><stop offset=".5" stopColor="#2a8fd0" /><stop offset=".75" stopColor="#6abf55" /><stop offset="1" stopColor="#f5c91f" /></linearGradient>
            <linearGradient id="mB" x1="0" y1="0" x2="0" y2="1"><stop offset="0" stopColor="#a24ce0" /><stop offset="1" stopColor="#f0609a" /></linearGradient>
          </defs>
          <path d="M17 1H22Q26 1 27 5L29 11H20Z" fill="#1b3fc0" />
          <path d="M9 1H22Q19 3 18 7L14 22Q12 26 8 26H5Q-1 25 0 18L4 6Q5 1 9 1Z" fill="url(#mA)" />
          <path d="M16 26Q18 24 19 18Q20 11 25 11H31Q37 11 36 18L34 26Z" fill="url(#mB)" />
          <rect x="10" y="24" width="26" height="12" rx="1.500" fill="#0b0b0b" />
          <text x="23" y="33.500" textAnchor="middle" fontSize="9.500" fontWeight="700" fill="#fff">M365</text>
        </App36>
        <App36 dot>
          <path d="M0 3Q0 2 1.500 2H12L15 5H34Q36 5 36 7V15H0Z" fill="#e0a008" />
          <path d="M0 10H13L17 7H36V32Q36 35 33 35H3Q0 35 0 32Z" fill="#fdcb45" />
          <path d="M6 35V29Q6 24 11 24H25Q30 24 30 29V35Z" fill="#1673c4" />
          <path d="M11 30H25" stroke="#0b4f94" strokeWidth="2" />
        </App36>
        <App36 dot>
          <defs>
            <linearGradient id="ed" x1="0" y1="0" x2="1" y2=".5"><stop offset="0" stopColor="#1ba4e6" /><stop offset=".5" stopColor="#2cc3d0" /><stop offset="1" stopColor="#6adf4a" /></linearGradient>
          </defs>
          <path d="M0 18C0 8 8 0 18 0S36 8 36 16L22 20L34 28C31 33 25 36 18 36C8 36 0 28 0 18Z" fill="#1788dd" />
          <path d="M0 17C1 7 9 0 18 0c11 0 18 8 18 15c0 5-4 9-9 9c-5 0-7-2-5-5c2-4-1-8-6-8C9 10 3 12 0 17Z" fill="url(#ed)" />
          <path d="M22 17C22 19 20 20 22 22.500C25 25 32 25 35 21L34 28C27 31 20 28 18 22C17 18 20 15 22 17Z" fill="#f0dccf" />
          <path d="M15 14C7 20 11 34 22 35.500C28 35 32 32 34 28C26 32 18 28 17 20Q17 17 19 15.500Z" fill="#11509e" />
        </App36>
        <App36>
          <path d="M9 6V3Q9 1 11 1H25Q27 1 27 3V6" stroke="#28b5f2" strokeWidth="2.200" />
          <path d="M0 5H35V32Q35 36 31 36H4Q0 36 0 32Z" fill="#155a9e" />
          <path d="M0 24L35 14V32Q35 36 31 36H4Q0 36 0 32Z" fill="#1d4076" opacity=".6" />
          <path d="M9 5V8M27 5V8" stroke="#28b5f2" strokeWidth="2.200" />
          <path d="M10 13H17V20H10Z" fill="#f25022" /><path d="M18.500 13H25.500V20H18.500Z" fill="#7fba00" />
          <path d="M10 21.500H17V28.500H10Z" fill="#00a4ef" /><path d="M18.500 21.500H25.500V28.500H18.500Z" fill="#ffb900" />
        </App36>
        <App36>
          <path d="M6 12L21 3L36 12V29Q36 33 32 33H10Q6 33 6 29Z" fill="#1f7fd0" />
          <path d="M16 20L36 8V15L24 26Z" fill="#0d3f96" />
          <path d="M8 33L36 16V29Q36 33 32 33Z" fill="#3fd2f4" />
          <rect x="0" y="9" width="18" height="18" rx="2" fill="#1169cf" />
          <circle cx="9" cy="18" r="4.200" stroke="#fff" strokeWidth="2.300" />
        </App36>
        <App36>
          <path d="M2 34L4.500 25.500A16 16 0 1 1 10.500 31.500Z" stroke="#1f8f57" strokeWidth="3.400" />
          <path d="M11 9q2-2 3.500 0l2 4q0 1.500-2 3.500q2 4 6 6q2-2.500 3.500-2.500l4 2q1 4-4 5.500C18 28.500 9 19 9 13q0-3 2-4Z" fill="#1f8f57" />
        </App36>
        <App36>
          <rect x="4" y="2" width="28" height="29" rx="1.500" fill="#62c8e4" />
          <path d="M4 31H32V33H4Z" fill="#e8e4e0" /><path d="M4 33H32V36H4Z" fill="#b5561b" />
          <path d="M9 11H27M9 17H27M9 23H27" stroke="#10738f" strokeWidth="2" />
          <path d="M9 0V4M15 0V4M21 0V4M27 0V4" stroke="#0d5d74" strokeWidth="2.500" />
        </App36>
        <App36>
          <path d="M5 3H22Q24 3 24 5V26L12 30L5 27Z" fill="#fbdc85" />
          <path d="M5 3L12 7V34L5 28Z" fill="#fde9ad" />
          <path d="M13 24a7 7 0 0 1 8-6a6 6 0 0 1 8 5a5 5 0 0 1 1 9H17a5 5 0 0 1-4-8Z" fill="#1585dc" />
          <path d="M13 25q5-10 13-5L17 30Z" fill="#0b5fb0" />
        </App36>
        <App36>
          <circle cx="18" cy="18" r="18" fill="#a435f0" />
          <path d="M12 10.500L18 7L24 10.500" stroke="#fff" strokeWidth="2.500" />
          <path d="M13.500 15V22.500Q13.500 27.500 18 27.500Q22.500 27.500 22.500 22.500V15" stroke="#fff" strokeWidth="3.500" />
        </App36>
        <div className="relative h-[70px] w-[66px]">
          <div className="absolute top-1.5 left-[11px] h-[57px] w-[50px] rounded-[7px] border-r-2 border-b-2 border-black/10 bg-white/40" />
          <div className="absolute top-1.5 left-[7px] h-[57px] w-[50px] rounded-[7px] border border-b-2 border-black/10 bg-white/50" />
          <svg className="absolute top-4 left-[15px] h-9 w-9" viewBox="0 0 36 36">
            <path d="M0 0H36V36H0Z" fill="#0078d4" />
            <path d="M20 0H31V36H20Z" fill="#c98a10" /><path d="M20 0H31V20H20Z" fill="#dfa21a" />
            <path d="M12 9H24V36H12Z" fill="#f0c32e" /><path d="M4 18H15V36H4Z" fill="#f7dc56" />
          </svg>
          <div className="absolute top-[57px] left-[21px] h-[5px] w-6 rounded-full bg-[#0078d4]" />
        </div>
        <Office a="#41a5ee" b="#2b7cd3" c="#185abd" d="#103f91" t="#185abd" l="W" />
        <Office a="#33c481" b="#21a366" c="#107c41" d="#185c37" t="#107c41" l="X" />
        <App36 dot>
          <path d="M18 18L2.400 9A18 18 0 0 1 33.600 9Z" fill="#e33b2e" />
          <path d="M18 18L33.600 9A18 18 0 0 1 18 36Z" fill="#fcc419" />
          <path d="M18 18L18 36A18 18 0 0 1 2.400 9Z" fill="#2a9d4a" />
          <path d="M18 9.600H34L26 20Z" fill="#fcc419" />
          <path d="M25.300 22.200L17.500 36L13 24Z" fill="#2a9d4a" />
          <path d="M10.700 22.200L2.400 9L12 10Z" fill="#e33b2e" />
          <path d="M10 22L3 10" stroke="#2a9d4a" strokeWidth="2" />
          <circle cx="18" cy="18" r="8.500" fill="#fff" /><circle cx="18" cy="18" r="6.800" fill="#2f7de9" />
        </App36>
      </div>
      <svg className="mt-6 ml-[163px] h-6 w-[190px] overflow-visible" viewBox="0 0 190 24" fill="none" stroke="#1b1b1b" strokeWidth="1.900">
        <path d="M0 13L8 5L16 13" />
        <g transform="translate(1 -2)">
          <path d="M49 20a5.500 5.500 0 0 1 0-11a8 8 0 0 1 14-1a6 6 0 0 1 0 12Z" fill="#c9c9c9" />
          <path d="M46 10q8-5 12 1l8 6" stroke="#777" strokeWidth="1.300" />
          <path d="M91 11Q103-1 115 11M94.500 14Q103 5 111.500 14M98 17Q103 12 108 17" />
          <circle cx="103" cy="19.500" r="1.500" fill="#1b1b1b" />
          <path d="M128 9H132L138 4V20L132 15H128Z" />
          <path d="M141 8.500Q143.500 12 141 15.500M144 6Q148 12 144 18" />
          <path d="M147 3Q152 12 147 21" stroke="#b8bcc0" />
          <rect x="165" y="4" width="20" height="15" rx="3" />
          <rect x="167.500" y="6.500" width="7" height="10" fill="#1b1b1b" stroke="none" />
          <path d="M187.500 9V14" strokeWidth="3" />
        </g>
      </svg>
      <div className="mt-[7px] mr-[29px] ml-auto text-right text-[17.500px] leading-6 tracking-[-0.2px] whitespace-nowrap text-[#1b1b1b]">
        <div>1:51 PM</div>
        <div>5/13/2025</div>
      </div>
    </footer>
  );
}

export default function App() {
  return (
    <div className={`flex h-[1536px] w-[2304px] flex-col overflow-hidden bg-white ${FONT}`}>
      <TitleBar />
      <Ribbon />
      <main className="relative flex h-[1188px] shrink-0">
        <Rail />
        <div className="flex w-[2139px] shrink-0 flex-col">
          <div className="flex h-[1135px]">
            <div className="w-[2090px] shrink-0"><Tree /></div>
            <div className="flex w-[49px] shrink-0 flex-col items-center border-l border-[#a5a3a1] bg-white">
              <Chevrons />
              <svg className="mt-[22px] ml-1.5 h-5 w-[18px]" viewBox="0 0 18 20" fill="none" stroke="#252423" strokeWidth="1.700">
                <path d="M17 1V19L9 12.500H1V7.500H9Z" />
              </svg>
              <VLabel t="Filters" className="mt-[11px] text-[21.500px]" />
            </div>
          </div>
          <PageTabs />
        </div>
        <div className="flex w-[53px] shrink-0 flex-col items-center border-l border-[#dddbd9] bg-[#f3f2f1]">
          <Chevrons />
          <VLabel t="Visualizations" className="mt-[21px] mr-1.5 text-[22px]" />
        </div>
        <div className="flex w-[51px] shrink-0 flex-col items-center border-l border-[#dddbd9] bg-[#f3f2f1]">
          <Chevrons />
          <VLabel t="Data" className="mt-[21px] mr-1.5 text-[22px]" />
        </div>
        <div className="absolute top-[571px] left-[2164px] flex h-[47px] w-[81px] items-center justify-center rounded bg-white text-[17px] tracking-[-0.2px] text-black shadow-[0_6px_16px_rgba(0,0,0,0.22)]">
          <div className="absolute top-[12px] -right-[10px] h-[22px] w-[22px] rotate-45 rounded-[2px] bg-white" />
          <span className="relative">Expand</span>
        </div>
      </main>
      <StatusBar />
      <div className="h-px w-[1120px] shrink-0 bg-black" />
      <Taskbar />
    </div>
  );
}
